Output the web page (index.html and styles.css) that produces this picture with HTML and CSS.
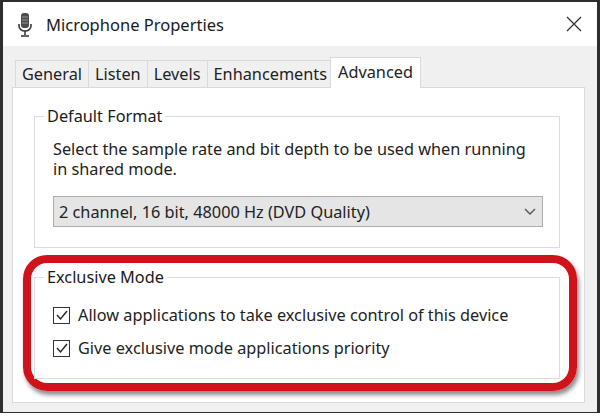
FILE: index.html
```html
<!DOCTYPE html>
<html lang="en">
<head>
    <meta charset="UTF-8">
    <title>Microphone Properties</title>
    <link rel="stylesheet" href="styles.css">
</head>
<body>
    <div class="window">
        <div class="titlebar">
            <svg class="mic" width="14" height="24" viewBox="0 0 14 24">
                <rect x="3" y="0" width="8" height="15" rx="3" fill="#4a4a4a"/>
                <line x1="4" y1="4" x2="10" y2="4" stroke="#9a9a9a"/>
                <line x1="4" y1="7" x2="10" y2="7" stroke="#9a9a9a"/>
                <line x1="4" y1="10" x2="10" y2="10" stroke="#9a9a9a"/>
                <path d="M1 11 v2 a6 5 0 0 0 12 0 v-2" fill="none" stroke="#3a3a3a" stroke-width="1.6"/>
                <line x1="7" y1="18" x2="7" y2="22" stroke="#3a3a3a" stroke-width="1.6"/>
                <line x1="3" y1="23" x2="11" y2="23" stroke="#3a3a3a" stroke-width="1.6"/>
            </svg>
            <span class="title">Microphone Properties</span>
            <svg class="close" width="16" height="16" viewBox="0 0 16 16">
                <path d="M1 1 L15 15 M15 1 L1 15" stroke="#333" stroke-width="1.3"/>
            </svg>
        </div>

        <div class="content">
            <div class="tabs">
                <div class="tab">General</div>
                <div class="tab">Listen</div>
                <div class="tab">Levels</div>
                <div class="tab">Enhancements</div>
                <div class="tab active">Advanced</div>
            </div>

            <div class="panel">
                <fieldset class="group format">
                    <legend>Default Format</legend>
                    <p>Select the sample rate and bit depth to be used when running<br>in shared mode.</p>
                    <div class="select">
                        <span>2 channel, 16 bit, 48000 Hz (DVD Quality)</span>
                        <svg width="12" height="7" viewBox="0 0 12 7">
                            <polyline points="1,1 6,6 11,1" fill="none" stroke="#555" stroke-width="1.4"/>
                        </svg>
                    </div>
                </fieldset>

                <div class="highlight">
                    <fieldset class="group exclusive">
                        <legend>Exclusive Mode</legend>
                        <label class="check">
                            <span class="box">
                                <svg width="14" height="14" viewBox="0 0 14 14"><polyline points="2,7 5.5,11 12,3" fill="none" stroke="#222" stroke-width="1.4"/></svg>
                            </span>
                            Allow applications to take exclusive control of this device
                        </label>
                        <label class="check">
                            <span class="box">
                                <svg width="14" height="14" viewBox="0 0 14 14"><polyline points="2,7 5.5,11 12,3" fill="none" stroke="#222" stroke-width="1.4"/></svg>
                            </span>
                            Give exclusive mode applications priority
                        </label>
                    </fieldset>
                </div>
            </div>
        </div>
    </div>
</body>
</html>
```

FILE: styles.css
```css
body {
    margin: 0;
    background: #fff;
    font-family: "Noto Sans", "Open Sans", sans-serif;
    font-size: 16.3px;
    color: #222;
}
.window {
    width: 600px;
    height: 413px;
    box-sizing: border-box;
    border-top: 2px solid #2e2e2e;
    border-left: 3px solid #2e2e2e;
    border-right: 3px solid #2e2e2e;
    border-bottom: 1px solid #2e2e2e;
    background: #f0f0f0;
    display: flex;
    flex-direction: column;
}
.titlebar {
    height: 44px;
    background: #fff;
    display: flex;
    align-items: center;
    padding: 0 15px;
}
.mic {
    margin-top: 2px;
}
.title {
    margin-left: 14px;
    font-size: 16.5px;
    color: #1a1a1a;
    flex: 1;
}
.content {
    flex: 1;
    display: flex;
    flex-direction: column;
    padding: 11px 12px 9px 9px;
}
.tabs {
    display: flex;
    align-items: flex-end;
    padding-left: 3px;
}
.tab {
    height: 26px;
    line-height: 26px;
    padding: 0 6px;
    border: 1px solid #d9d9d9;
    border-bottom: none;
    margin-right: -1px;
    background: #f0f0f0;
}
.tab.active {
    height: 30px;
    line-height: 28px;
    background: #fff;
    margin-left: -3px;
    margin-bottom: -1px;
    padding: 0 7px;
    position: relative;
}
.panel {
    flex: 1;
    background: #fff;
    border: 1px solid #d9d9d9;
    padding: 17px 7px 0 10px;
}
.group {
    margin: 0;
    border: 1px solid #dcdcdc;
    padding: 12px 16px 20px 18px;
}
.group legend {
    margin-left: -9px;
    padding: 0 3px;
    color: #1a1a1a;
}
.format {
    margin: 0 17px 0 11px;
}
.format p {
    margin: 0;
    line-height: 20px;
}
.select {
    margin-top: 17px;
    height: 31px;
    box-sizing: border-box;
    background: #e5e5e5;
    border: 1px solid #adadad;
    display: flex;
    align-items: center;
    justify-content: space-between;
    padding: 0 6px 0 5px;
}
.highlight {
    margin-top: 7px;
    border: 8px solid #d0121b;
    border-radius: 24px;
    padding: 3px 9px 4px 3px;
    box-shadow: 2px 4px 4px rgba(0, 0, 0, 0.45);
}
.exclusive {
    padding: 16px 16px 19px 18px;
}
.check {
    display: flex;
    align-items: center;
    height: 22px;
}
.check + .check {
    margin-top: 11px;
}
.box {
    width: 15px;
    height: 15px;
    border: 1px solid #333;
    margin-right: 8px;
    display: flex;
    align-items: center;
    justify-content: center;
}
```
